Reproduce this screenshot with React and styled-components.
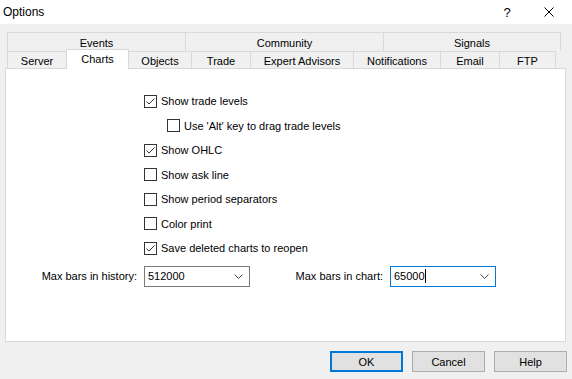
import React from 'react';
import styled, { createGlobalStyle } from 'styled-components';

const GlobalStyle = createGlobalStyle`
  html, body {
    margin: 0;
    padding: 0;
    background: #f0f0f0;
  }
  body {
    font-family: "Liberation Sans", Arial, sans-serif;
    font-size: 11px;
    color: #000;
  }
`;

const topTabs = [
  { label: 'Events', width: 179 },
  { label: 'Community', width: 199 },
  { label: 'Signals', width: 178 },
];

const bottomTabs = [
  { label: 'Server', width: 60 },
  { label: 'Charts', width: 63, active: true },
  { label: 'Objects', width: 64 },
  { label: 'Trade', width: 60 },
  { label: 'Expert Advisors', width: 104 },
  { label: 'Notifications', width: 88 },
  { label: 'Email', width: 60 },
  { label: 'FTP', width: 57 },
];

const options = [
  { label: 'Show trade levels', checked: true },
  { label: "Use 'Alt' key to drag trade levels", indent: true },
  { label: 'Show OHLC', checked: true },
  { label: 'Show ask line' },
  { label: 'Show period separators' },
  { label: 'Color print' },
  { label: 'Save deleted charts to reopen', checked: true },
];

const Window = styled.div`
  width: 572px;
  height: 379px;
  display: flex;
  flex-direction: column;
  overflow: hidden;
`;

const TitleBar = styled.div`
  height: 24px;
  background: #fff;
  display: flex;
  align-items: center;
  padding-left: 3px;
`;

const Title = styled.span`
  flex: 1;
  font-size: 12px;
`;

const HelpGlyph = styled.span`
  width: 46px;
  margin-right: -4px;
  text-align: center;
  font-size: 13px;
`;

const CloseButton = styled.span`
  width: 46px;
  display: flex;
  justify-content: center;
  align-items: center;
`;

const Body = styled.div`
  padding: 8px 6px 0 5px;
`;

const TabStrip = styled.div`
  margin-left: 2px;
`;

const TabRow = styled.div`
  display: flex;
  height: ${(p) => p.$height}px;
`;

const Tab = styled.div`
  box-sizing: border-box;
  width: ${(p) => p.$width}px;
  height: 100%;
  border: 1px solid #d9d9d9;
  border-bottom: none;
  margin-left: -1px;
  &:first-child {
    margin-left: 0;
  }
  background: #f0f0f0;
  display: flex;
  align-items: center;
  justify-content: center;
  padding-top: 2px;
  white-space: nowrap;
`;

const ActiveTab = styled(Tab)`
  position: relative;
  z-index: 2;
  background: #fff;
  height: 20px;
  margin-top: -2px;
  margin-bottom: -1px;
  align-items: flex-start;
  padding-top: 3px;
`;

const Panel = styled.div`
  box-sizing: border-box;
  height: 274px;
  background: #fff;
  border: 1px solid #d9d9d9;
  padding: 20px 0 0 5px;
`;

const OptionList = styled.div`
  padding-left: 133px;
`;

const OptionRow = styled.label`
  display: flex;
  align-items: center;
  height: 24.5px;
  padding-left: ${(p) => (p.$indent ? 23 : 0)}px;
`;

const Box = styled.span`
  box-sizing: border-box;
  width: 13px;
  height: 13px;
  border: 1px solid #333;
  background: #fff;
  display: flex;
  align-items: center;
  justify-content: center;
  margin-right: 4px;
`;

const ComboRow = styled.div`
  display: flex;
  align-items: center;
  margin-top: 5px;
`;

const FieldLabel = styled.span`
  width: ${(p) => p.$width}px;
  text-align: right;
  margin-right: 7px;
  white-space: nowrap;
`;

const Combo = styled.div`
  box-sizing: border-box;
  width: 106px;
  height: 21px;
  border: 1px solid ${(p) => (p.$focused ? '#0078d7' : '#7a7a7a')};
  background: #fff;
  display: flex;
  align-items: center;
  padding: 0 6px 0 3px;
`;

const ComboValue = styled.span`
  flex: 1;
  display: flex;
  align-items: center;
`;

const Caret = styled.span`
  width: 1px;
  height: 14px;
  background: #000;
`;

const ButtonRow = styled.div`
  display: flex;
  justify-content: flex-end;
  gap: 9px;
  margin-top: 9px;
  margin-right: -1px;
`;

const Button = styled.button`
  box-sizing: border-box;
  width: 73px;
  height: 21px;
  background: #e1e1e1;
  border: ${(p) => (p.$default ? '2px solid #0078d7' : '1px solid #adadad')};
  font-family: inherit;
  font-size: 11px;
  color: #000;
  padding: 0;
`;

const CheckMark = () => (
  <svg width="11" height="11" viewBox="0 0 11 11">
    <polyline points="1.5,5.5 4,8 9.5,2.5" fill="none" stroke="#333" strokeWidth="1" />
  </svg>
);

const Chevron = () => (
  <svg width="9" height="5" viewBox="0 0 9 5">
    <polyline points="0.5,0.5 4.5,4.5 8.5,0.5" fill="none" stroke="#444" strokeWidth="1" />
  </svg>
);

const CloseIcon = () => (
  <svg width="10" height="10" viewBox="0 0 10 10">
    <path d="M0.5 0.5 L9.5 9.5 M9.5 0.5 L0.5 9.5" stroke="#000" strokeWidth="1" />
  </svg>
);

const App = () => {
  return (
    <Window>
      <GlobalStyle />
      <TitleBar>
        <Title>Options</Title>
        <HelpGlyph>?</HelpGlyph>
        <CloseButton>
          <CloseIcon />
        </CloseButton>
      </TitleBar>
      <Body>
        <TabStrip>
          <TabRow $height={19}>
            {topTabs.map((t) => (
              <Tab key={t.label} $width={t.width}>{t.label}</Tab>
            ))}
          </TabRow>
          <TabRow $height={17}>
            {bottomTabs.map((t) =>
              t.active ? (
                <ActiveTab key={t.label} $width={t.width}>{t.label}</ActiveTab>
              ) : (
                <Tab key={t.label} $width={t.width}>{t.label}</Tab>
              )
            )}
          </TabRow>
        </TabStrip>
        <Panel>
          <OptionList>
            {options.map((o) => (
              <OptionRow key={o.label} $indent={o.indent}>
                <Box>{o.checked && <CheckMark />}</Box>
                {o.label}
              </OptionRow>
            ))}
          </OptionList>
          <ComboRow>
            <FieldLabel $width={126}>Max bars in history:</FieldLabel>
            <Combo>
              <ComboValue>512000</ComboValue>
              <Chevron />
            </Combo>
            <FieldLabel $width={133}>Max bars in chart:</FieldLabel>
            <Combo $focused>
              <ComboValue>
                65000
                <Caret />
              </ComboValue>
              <Chevron />
            </Combo>
          </ComboRow>
        </Panel>
        <ButtonRow>
          <Button $default>OK</Button>
          <Button>Cancel</Button>
          <Button>Help</Button>
        </ButtonRow>
      </Body>
    </Window>
  );
};

export default App;
